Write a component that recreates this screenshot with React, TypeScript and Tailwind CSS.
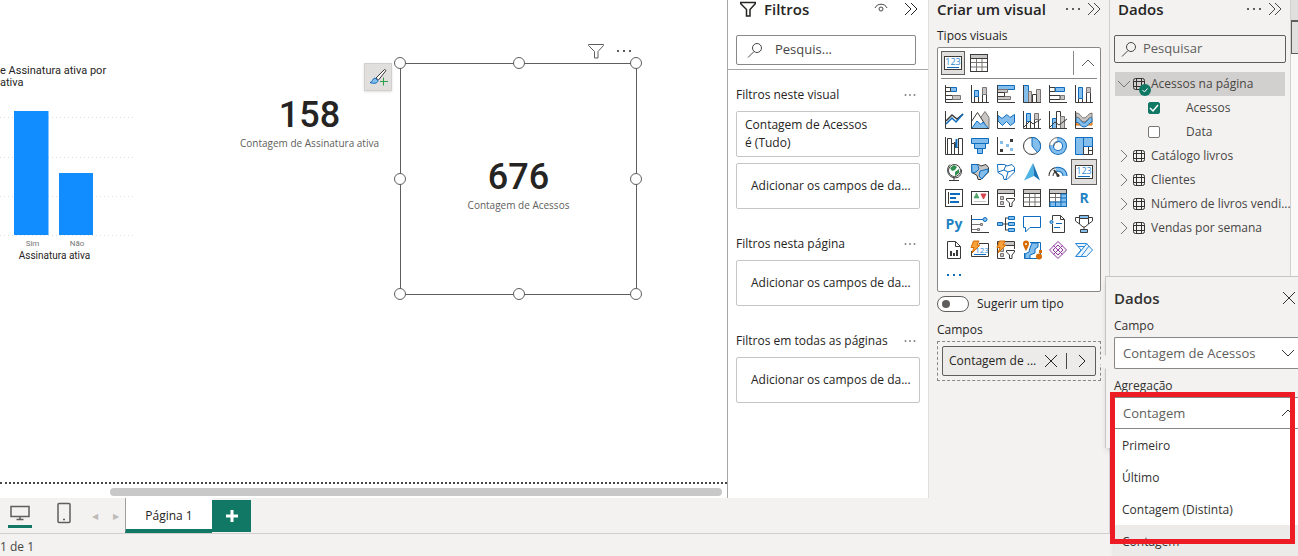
import { useState, type ReactNode } from 'react'

const K = '#3b3a39'
const B = '#0f6cbd'
const L = '#83beec'
const G = '#7a7574'
const S = '#c8c6c4'

function Icon({ children, className = 'size-[18px]' }: { children: ReactNode; className?: string }) {
  return (
    <svg viewBox="0 0 18 18" fill="none" className={`${className} shrink-0 overflow-visible`} aria-hidden="true">
      {children}
    </svg>
  )
}

const axes = <path d="M.5 0v17.5H18" stroke={K} />

const card123 = (
  <>
    <rect x=".5" y="2.5" width="17" height="13" fill="#fff" stroke={K} />
    <path d="M3 13.5h12" stroke={B} />
    <text x="9" y="11" fontSize="9" textAnchor="middle" fill="#2b88d8">123</text>
  </>
)

const tableIcon = (
  <>
    <rect x=".5" y=".5" width="17" height="17" fill="#fff" stroke={K} />
    <path d="M1 2.5h16" stroke={S} strokeWidth="3" />
    <path d="M.5 4.5h17M.5.5h17" stroke={K} />
    <path d="M1 8.5h16M1 13h16M6.5 5v12M12 5v12" stroke={G} />
  </>
)

const slicer = (
  <>
    <path d="M8 17.5H.5V.5h17V8" stroke={K} />
    <path d="M1 2.5h16" stroke={S} strokeWidth="3" />
    <path d="M1 4.5h16" stroke={K} />
    <path d="M3.5 7.5h3v3h-3zM3.5 12.5h3v3h-3z" fill={S} stroke={G} />
    <path d="M9.5 9.5h8v1.5L15 14v3.5h-2.500V14l-3-3z" fill="#fff" stroke={K} />
  </>
)

const bolt = <path d="M2.500 0H8L6 4h3L1 12l2-5.500H0z" fill="#f8a23c" stroke="#d86a00" />

const visuals: { name: string; art: ReactNode }[] = [
  { name: 'Barras empilhadas', art: <><path d="M5.500 2.500h6v4h-6z" fill={L} stroke={B} /><path d="M1 2.500h4.500v4H1" stroke={K} fill="#fff" /><path d="M1 10.500h6.500v4H1" stroke={K} fill="#fff" /><path d="M7.500 10.500h8v4h-8z" fill={S} stroke={G} />{axes}</> },
  { name: 'Colunas empilhadas', art: <><path d="M3.500 11.500h4v6h-4zM11.500 9.500h4v8h-4z" fill="#fff" stroke={K} /><path d="M3.500 5.500h4v6h-4z" fill={L} stroke={B} /><path d="M11.500 2.500h4v7h-4z" fill={S} stroke={G} />{axes}</> },
  { name: 'Barras agrupadas', art: <><path d="M.5.5h17v4H.5z" fill={L} stroke={B} /><path d="M.5 4.500h10v3H.5zM.5 11.500h13v3H.5z" fill={S} stroke={G} /><path d="M.5 7.500h7v4H.5z" fill="#fff" stroke={K} />{axes}</> },
  { name: 'Colunas agrupadas', art: <><path d="M.5.5h5v17h-5z" fill={L} stroke={B} /><path d="M5.500 6.500h3v11h-3zM13.500 4.500h4v13h-4z" fill={S} stroke={G} /><path d="M9.500 9.500h4v8h-4z" fill="#fff" stroke={K} />{axes}</> },
  { name: 'Barras 100%', art: <><path d="M1 2.500h5v4H1M1 10.500h10v4H1" fill="#fff" stroke={K} /><path d="M6.500 2.500h9v4h-9z" fill={L} stroke={B} /><path d="M11.500 10.500h4v4h-4z" fill={S} stroke={G} />{axes}</> },
  { name: 'Colunas 100%', art: <><path d="M3.500 13.500h4v4h-4zM11.500 7.500h4v10h-4z" fill="#fff" stroke={K} /><path d="M3.500 2.500h4v11h-4z" fill={L} stroke={B} /><path d="M11.500 2.500h4v5h-4z" fill={S} stroke={G} />{axes}</> },
  { name: 'Linhas', art: <><path d="M1 10l6-6 5 4 6-5" stroke={K} strokeWidth="1.500" /><path d="M1 13l6-6 4 4 7-8" stroke={B} strokeWidth="1.500" />{axes}</> },
  { name: 'Área', art: <><path d="M8 9l6-8.500 4 6v11H8z" fill={S} stroke={G} /><path d="M.5 10.500l6-9 7 11-2 5H.5z" fill="#fff" stroke={K} /><path d="M1 17l5-7 4 3.500 2-2.500 5.500 6.500H1z" fill={L} stroke={B} />{axes}</> },
  { name: 'Área empilhada', art: <><path d="M1 4.500l4 3 5-4 3 3 4.500-3v8l-4 3-4-4-4 4L1 10z" fill={L} stroke={B} />{axes}</> },
  { name: 'Linhas e colunas empilhadas', art: <><path d="M3.500 8.500h4v9h-4zM11.500 7.500h4v10h-4z" fill="#fff" stroke={K} /><path d="M3.500 2.500h4v8h-4z" fill={L} stroke={B} /><path d="M11.500 2.500h4v6h-4z" fill={S} stroke={G} /><path d="M1 16l6-6 3 3 8-5" stroke={K} />{axes}</> },
  { name: 'Linhas e colunas agrupadas', art: <><path d="M3.500 7.500h4v10h-4z" fill={L} stroke={B} /><path d="M7.500.5h4v17h-4z" fill="#fff" stroke={K} /><path d="M11.500 5.500h4v12h-4z" fill={S} stroke={G} /><path d="M1 16l5-5 4 3 8-6" stroke={K} />{axes}</> },
  { name: 'Faixas', art: <><path d="M1 9h5v5H1zM12 8h5v6h-5z" fill="#f2a154" stroke="#d86a00" /><path d="M1 6c5 0 5 6 8 6s4-6 8-6v5c-3 0-4 5-8 5s-4-5-8-5z" fill={L} stroke={B} /><path d="M1 2c5 0 5 5 8 5s4-5 8-5v4c-4 0-5 5-8 5S5 6 1 6z" fill={S} stroke={G} />{axes}</> },
  { name: 'Cascata', art: <><path d="M2.500 17V1.500h4v5h3V17M13.500 17V1.500h4V17M6.500 6v11" fill="#fff" stroke={K} /><path d="M9 5.500h1.500v5h3v-9" stroke={K} /><path d="M11.500 2v9" stroke={B} strokeWidth="2" />{axes}</> },
  { name: 'Funil', art: <path d="M.5 1.500h17v5H.5zM3.500 6.500h11v5h-11zM6.500 11.500h5v5h-5z" fill={L} stroke={B} /> },
  { name: 'Dispersão', art: <><path d="M3 12h3v3H3zM13 2h3v3h-3z" fill={K} /><path d="M3 4h3v3H3zM9 7h3v3H9zM13 11h3v3h-3z" fill={L} />{axes}</> },
  { name: 'Pizza', art: <><circle cx="9" cy="9" r="8.500" fill="#fff" stroke={K} /><path d="M9 .5a8.500 8.500 0 0 1 5.500 15L9 9z" fill={L} stroke={B} /></> },
  { name: 'Rosca', art: <><circle cx="9" cy="9" r="6.500" stroke={B} strokeWidth="5" /><circle cx="9" cy="9" r="6.500" stroke={L} strokeWidth="3" /><path d="M2 8a7 7 0 0 1 6-6" stroke="#fff" strokeWidth="4" /><path d="M.5 9A8.500 8.500 0 0 1 9 .5M5 9a4 4 0 0 1 4-4" stroke={G} /></> },
  { name: 'Treemap', art: <><path d="M.5.5h8v17h-8z" fill={L} stroke={B} /><path d="M8.500 9.500h5v8h-5zM13.500 9.500h4v4h-4zM13.500 13.500h4v4h-4z" fill="#fff" stroke={K} /><path d="M8.500.5h9v9h-9z" fill={L} stroke={B} /></> },
  { name: 'Mapa', art: <><circle cx="9.500" cy="7.500" r="6" fill="#fff" stroke={K} /><path d="M5 5l4-3 3 2-2 3-3 1zM10 9l4-3v4l-4 3z" fill="#2f8f4e" /><path d="M5 1.500C1 5 2 13 8 14.500s9-3 8.500-8M9 15v2M4 17.500h10" stroke={K} /></> },
  { name: 'Mapa coroplético', art: <><path d="M.5 1.500h7L10 3l5-1.500 2.500 3V9L14 12.500l-4 4H7l-1-4-5-3z" fill={S} stroke={K} /><path d="M.5 1.500h6L8 6 5 9l-4 1zM9 8l8-2v3l-3 3-3 4-3-3z" fill={L} stroke={B} /></> },
  { name: 'Mapa de formas', art: <><path d="M.5 1.500h7L10 3l5-1.500 2.500 3V9L14 12.500l-4 4H7l-1-4-5-3z" fill="#fff" stroke={B} /><path d="M1 9l6-2 2-5M7 7l4 2 6-2M11 9l-2 7" stroke={B} /></> },
  { name: 'Azure Maps', art: <><path d="M10 0L1 17.500l10-4.500z" fill="#50b4e4" /><path d="M10 0l7 17.500L11 13z" fill="#1b74b8" /></> },
  { name: 'Medidor', art: <><path d="M2 13a7 7 0 0 1 5-6.500" stroke={K} strokeWidth="5" /><path d="M2 13a7 7 0 0 1 5-6.500" stroke="#fff" strokeWidth="3" /><path d="M7 6.500A7 7 0 0 1 16 13" stroke={B} strokeWidth="5" /><path d="M7 6.500A7 7 0 0 1 16 13" stroke={L} strokeWidth="3" /><path d="M5 7l4.500 6" stroke={K} strokeWidth="2" /><circle cx="9" cy="12.500" r="1.500" fill={K} /></> },
  { name: 'Cartão', art: card123 },
  { name: 'Cartão de várias linhas', art: <><rect x=".5" y=".5" width="17" height="17" fill="#fff" stroke={K} /><path d="M3.500 3v12" stroke={K} /><path d="M5 5h10M5 9h6M5 13h9" stroke={B} strokeWidth="2" /></> },
  { name: 'KPI', art: <><rect x=".5" y="2.500" width="17" height="13" fill="#fff" stroke={K} /><path d="M3 9l2.500-5L8 9z" fill="#4fa66a" stroke="#2f8f4e" strokeWidth=".5" /><path d="M10 5h5l-2.500 5z" fill="#d64550" stroke="#d64550" /><path d="M3 12.500h12" stroke={S} /></> },
  { name: 'Segmentação', art: slicer },
  { name: 'Tabela', art: tableIcon },
  { name: 'Matriz', art: <>{tableIcon}<path d="M12 5h5.500v12.500H1V13h11z" fill={L} stroke={B} /><path d="M6.500 13v4M12 13v4M12 9h5M12 13h5" stroke={B} /></> },
  { name: 'R', art: <text x="9" y="14" fontSize="14" fontWeight="700" textAnchor="middle" fill="#1f83c4">R</text> },
  { name: 'Python', art: <text x="9" y="14" fontSize="14" fontWeight="700" textAnchor="middle" fill="#1f83c4">Py</text> },
  { name: 'Influenciadores', art: <><path d="M1 4.500h11" stroke={B} /><path d="M1 9.500h8M1 14.500h5" stroke={G} /><circle cx="14" cy="4.500" r="2" fill={L} stroke={B} /><path d="M9.500 8.500h2v2h-2zM6.500 13.500h2v2h-2z" fill={S} stroke={G} />{axes}</> },
  { name: 'Árvore hierárquica', art: <><path d="M5 9h6M8.500 3v12M8 3h4M8 15h4" stroke={K} /><path d="M.5 7.500h5v3h-5zM11.500 1.500h6v3h-6zM11.500 7.500h6v3h-6zM11.500 13.500h6v3h-6z" fill={L} stroke={B} /></> },
  { name: 'P e R', art: <path d="M.5 1.500h17v11H7L2.500 17v-4.500h-2z" fill="#fff" stroke={B} /> },
  { name: 'Narrativa', art: <><path d="M3.500 5V.5h8l4 4v13h-12V9M11.500.5v4h4" stroke={K} /><circle cx="2.500" cy="7" r="1.500" fill={L} stroke={B} /><path d="M7 8.500h6M5 12.500h6" stroke={B} /></> },
  { name: 'Metas', art: <><path d="M4.500.5h9V9L10 12H8L4.500 9zM4.500 2.500h-4V6l4 3M13.500 2.500h4V6l-4 3M9 12v3" fill="#fff" stroke={K} /><path d="M4.500.5h9v3h-9zM5.500 14.500h7v3h-7z" fill={L} stroke={K} /></> },
  { name: 'Relatório paginado', art: <><path d="M2.500.5h8l5 5v12h-13zM10.500.5v5h5" fill="#fff" stroke={K} /><path d="M5 10h2v5H5zM8 12h2v3H8zM11 9h2v6h-2z" fill={K} /></> },
  { name: 'Novo cartão', art: <><path d="M8 2.500h9.500v13H.5V10" fill="#fff" stroke={K} /><path d="M3 13.500h12" stroke={B} /><text x="11" y="12" fontSize="8" textAnchor="middle" fill="#2b88d8">123</text>{bolt}</> },
  { name: 'Nova segmentação', art: <>{slicer}{bolt}</> },
  { name: 'ArcGIS', art: <><path d="M7 1.500h10.500v16H1.500V12" fill="#fff" stroke={B} /><path d="M9 2h6v4l-3 2v4l-5 2v3.500H2V13l4-2 1-4z" fill={L} stroke={B} /><path d="M0 2.500A3 3 0 0 1 6 2.500C6 5 3 10 3 10S0 5 0 2.500" fill="#d86a00" /><circle cx="3" cy="3" r="1" fill="#fff" /><circle cx="16" cy="15.500" r="3" fill="#d86a00" /><path d="M16 9h3v3h-3z" fill="#d86a00" /></> },
  { name: 'Power Apps', art: <path d="M9 .5L17.500 9 9 17.500.5 9zM4.500 4.500l9 9M13.500 4.500l-9 9M9 4l5 5-5 5-5-5z" fill="#fbf5fc" stroke="#8e3a9d" /> },
  { name: 'Power Automate', art: <path d="M.5 2.500h11L17.500 9l-6 6.500H.5L6 9zM3 5.500h6M12 2.500L2 14.500M14 5L6 15.500" stroke="#2b88d8" fill="#eef6fd" /> },
]

const Chevron = ({ d, className }: { d: string; className?: string }) => (
  <svg viewBox="0 0 14 14" className={`size-3.5 shrink-0 ${className ?? ''}`} fill="none" stroke="currentColor" aria-hidden="true">
    <path d={d} />
  </svg>
)

const DOWN = 'M1 4l6 6 6-6'
const UP = 'M1 10l6-6 6 6'
const RIGHT = 'M4 1l6 6-6 6'
const COLLAPSE = 'M1 1l6 6-6 6M7 1l6 6-6 6'
const CLOSE = 'M1 1l12 12M13 1L1 13'

function Dots({ className = 'w-4 text-[#605e5c]' }: { className?: string }) {
  return (
    <svg viewBox="0 0 16 4" className={`h-1 ${className}`} fill="currentColor" aria-hidden="true">
      <path d="M1 1h2v2H1zM7 1h2v2H7zM13 1h2v2h-2z" />
    </svg>
  )
}

function SearchGlyph() {
  return (
    <svg viewBox="0 0 16 16" className="size-4 shrink-0" fill="none" stroke="#484644" aria-hidden="true">
      <circle cx="10" cy="6" r="4.500" />
      <path d="M7 9.500L1 15.500" />
    </svg>
  )
}

function Funnel({ className }: { className: string }) {
  return (
    <svg viewBox="0 0 16 16" className={className} fill="none" stroke="currentColor" aria-hidden="true">
      <path d="M.5 1.500h15v1L10 8.500V15H6.500V8.500L.5 2.500z" />
    </svg>
  )
}

const handles = [
  '-left-px -top-px', 'left-1/2 -top-px', 'left-full -top-px',
  '-left-px top-1/2', 'left-full top-1/2',
  '-left-px top-full', 'left-1/2 top-full', 'left-full top-full',
]

function CardValue({ value, label }: { value: string; label: string }) {
  return (
    <div className="text-center">
      <p className="font-['Roboto',sans-serif] text-4xl font-medium leading-9 text-[#252423]">{value}</p>
      <p className="text-[10px] leading-5 whitespace-nowrap text-[#605e5c]">{label}</p>
    </div>
  )
}

function ReportCanvas() {
  return (
    <main className="relative min-w-0 flex-1 overflow-hidden bg-white">
      <svg width="140" height="210" viewBox="0 0 140 210" className="absolute top-[60px] left-0 font-['Roboto',sans-serif]">
        <g fill="#252423" fontSize="11">
          <text x="0" y="14">e Assinatura ativa por</text>
          <text x="0" y="26">ativa</text>
          <text x="54.500" y="199" fontSize="10" textAnchor="middle">Assinatura ativa</text>
        </g>
        <path d="M0 57.500h133M0 97.500h133M0 136.500h133M0 175.500h133" stroke="#dcdcdc" strokeDasharray="1 3" />
        <path d="M14 51h34.500v124H14zM59 113h34v62H59z" fill="#118dff" />
        <g fill="#777" fontSize="8" textAnchor="middle">
          <text x="32.500" y="186">Sim</text>
          <text x="77" y="186">Não</text>
        </g>
      </svg>

      <div className="absolute top-[97px] left-[240px]">
        <CardValue value="158" label="Contagem de Assinatura ativa" />
      </div>

      <button aria-label="Formatar visual" className="absolute top-[63px] left-[364px] flex size-7 items-center justify-center border border-[#d2d0ce] bg-[#e1dfdd] shadow">
        <Icon>
          <path d="M7 10L15.500 1.500l1.500 1L9.500 12z" fill="#fff" stroke={K} />
          <path d="M1 14.500c3 0 2-4 5-4.500l3 2.500c0 3-5 3.500-8 2z" fill={L} stroke={B} />
          <path d="M14.500 9.500v8M11 13.500h8" stroke="#2f9e44" />
        </Icon>
      </button>

      <div className="absolute top-[43px] left-[588px] flex items-center gap-3 text-[#605e5c]">
        <button aria-label="Filtros do visual"><Funnel className="size-4" /></button>
        <button aria-label="Mais opções do visual"><Dots /></button>
      </div>
      <section className="absolute top-[63px] left-[400px] flex h-[232px] w-[237px] items-center justify-center border border-[#605e5c] pt-4">
        <CardValue value="676" label="Contagem de Acessos" />
        {handles.map((pos) => (
          <span key={pos} className={`absolute size-3 -translate-1/2 rounded-full border border-[#605e5c] bg-white ${pos}`} />
        ))}
      </section>

      <div className="absolute bottom-3.5 left-0 w-full border-t-2 border-dotted border-[#484644]" />
      <div className="absolute right-[5px] bottom-0.5 left-[110px] h-2 rounded-full bg-[#c8c8c8]" />
    </main>
  )
}

const filterGroups = [
  { title: 'Filtros neste visual', applied: true },
  { title: 'Filtros nesta página', applied: false },
  { title: 'Filtros em todas as páginas', applied: false },
]

function FiltersPane() {
  return (
    <aside className="w-[202px] shrink-0 border-x border-l-[#a6a6a6] border-r-[#e1dfdd] bg-white">
      <div className="border-b border-[#a6a6a6] px-2 pb-1">
        <header className="flex h-[35px] items-start pr-0.5 pl-1">
          <Funnel className="mt-px size-4 stroke-[1.5] text-[#252423]" />
          <h2 className="ml-2 flex-1 text-[15px] leading-[18px] font-semibold">Filtros</h2>
          <button aria-label="Ocultar filtros" className="mt-px mr-4">
            <svg viewBox="0 0 14 14" className="size-3.5" fill="none" stroke="#484644" aria-hidden="true">
              <path d="M1 7c2-5 10-5 12 0" />
              <circle cx="7" cy="8" r="2" />
            </svg>
          </button>
          <button aria-label="Recolher filtros" className="mt-0.5"><Chevron d={COLLAPSE} /></button>
        </header>
        <label className="mr-1 flex h-[30px] items-center gap-3 rounded-xs border border-[#8a8886] px-2.5">
          <SearchGlyph />
          <input aria-label="Pesquisar filtros" placeholder="Pesquis..." className="w-full min-w-0 text-[13px] outline-none placeholder:text-[#484644]" />
        </label>
      </div>
      {filterGroups.map(({ title, applied }) => (
        <section key={title} className="px-2 pt-[15px]">
          <header className="mb-1.5 flex h-5 items-center justify-between pr-1">
            <h3 className="text-xs whitespace-nowrap">{title}</h3>
            <button aria-label={`Opções: ${title}`}><Dots className="w-3 text-[#605e5c]" /></button>
          </header>
          {applied && (
            <button className="mb-1.5 block h-[46px] w-full rounded-xs border border-[#c8c6c4] px-2 text-left text-xs leading-[18px]">
              Contagem de Acessos<br />é (Tudo)
            </button>
          )}
          <div className="mb-2.5 flex h-[46px] items-center rounded-xs border border-[#c8c6c4] px-3.5 text-xs whitespace-nowrap">
            Adicionar os campos de da...
          </div>
        </section>
      ))}
    </aside>
  )
}

function PageTabs() {
  return (
    <nav className="flex h-[35px] shrink-0 items-start bg-[#f3f2f1]">
      <button aria-label="Layout da área de trabalho" className="mt-1.5 ml-2 h-6 w-6 border-b-3 border-[#117865]">
        <svg viewBox="0 0 20 16" className="mx-auto mb-1 h-4 w-5" fill="none" stroke="#605e5c" strokeWidth="1.500" aria-hidden="true">
          <path d="M1 1.500h18v10H1zM10 12v2M6.500 14.500h7" />
        </svg>
      </button>
      <button aria-label="Layout móvel" className="mt-1 ml-6">
        <svg viewBox="0 0 16 22" className="h-[22px] w-4" fill="none" stroke="#605e5c" strokeWidth="1.500" aria-hidden="true">
          <rect x="2" y="1.500" width="12" height="19" rx="1" />
          <path d="M7 17.500h2" />
        </svg>
      </button>
      <button aria-label="Página anterior" className="mt-2.5 ml-5 text-[8px] leading-4 text-[#bebbb8]">◀</button>
      <button aria-label="Próxima página" className="mt-2.5 ml-[15px] text-[8px] leading-4 text-[#bebbb8]">▶</button>
      <button className="ml-1.5 h-[35px] w-[87px] border-b-4 border-l border-b-[#117865] border-l-[#a19f9d] bg-white pt-1 text-xs font-medium">Página 1</button>
      <button aria-label="Nova página" className="mt-0.5 flex h-8 w-[39px] items-center justify-center bg-[#117865]">
        <svg viewBox="0 0 12 12" className="size-3" stroke="#fff" strokeWidth="3" aria-hidden="true">
          <path d="M6 0v12M0 6h12" />
        </svg>
      </button>
    </nav>
  )
}

function PaneHeader({ title }: { title: string }) {
  return (
    <header className="flex items-start text-[#484644]">
      <h2 className="flex-1 text-[15px] leading-[18px] font-semibold whitespace-nowrap text-[#252423]">{title}</h2>
      <button aria-label={`Opções: ${title}`} className="flex h-[18px] items-center"><Dots /></button>
      <button aria-label={`Recolher: ${title}`} className="mt-0.5 ml-1.5"><Chevron d={COLLAPSE} /></button>
    </header>
  )
}

function BuildPane() {
  const [selected, setSelected] = useState('Cartão')
  return (
    <aside className="w-[180px] shrink-0 bg-[#f3f2f1] pr-2 pl-2 text-xs">
      <PaneHeader title="Criar um visual" />
      <h3 className="mt-[9px] mb-0.5 leading-[18px]">Tipos visuais</h3>
      <div className="h-[245px] rounded-xs border border-[#8a8886] bg-white px-[3px] pt-[3px]">
        <div className="flex h-7 items-start border-b border-[#8a8886]">
          <button aria-label="Cartão recente" className="flex size-6 items-center justify-center border border-[#605e5c] bg-[#e1dfdd]"><Icon>{card123}</Icon></button>
          <button aria-label="Tabela recente" className="mt-[3px] ml-[5px]"><Icon>{tableIcon}</Icon></button>
          <button aria-label="Recolher tipos" className="ml-auto flex h-6 w-6 items-center justify-end border-l border-[#8a8886] pr-0.5 text-[#605e5c]"><Chevron d={UP} /></button>
        </div>
        <div className="mt-0.5 grid grid-cols-6">
          {visuals.map(({ name, art }) => (
            <button
              key={name}
              aria-label={name}
              onClick={() => setSelected(name)}
              className={`flex h-[26px] items-center justify-center border ${name === selected ? 'border-[#605e5c] bg-[#e1dfdd]' : 'border-transparent'}`}
            >
              <Icon>{art}</Icon>
            </button>
          ))}
        </div>
        <button aria-label="Mais visuais" className="mt-2.5 ml-[5px] block"><Dots className="w-4 text-[#0f6cbd]" /></button>
      </div>
      <label className="mt-[3px] flex h-[17px] items-center gap-2">
        <input type="checkbox" className="peer sr-only" />
        <span className="flex h-4 w-8 items-center rounded-full border border-[#605e5c] bg-white px-1">
          <span className="size-2 rounded-full bg-[#605e5c]" />
        </span>
        Sugerir um tipo
      </label>
      <h3 className="mt-[9px] mb-0.5 leading-[18px]">Campos</h3>
      <div className="border border-dashed border-[#8a8886] p-1">
        <div className="flex h-[30px] items-center rounded-xs border border-[#605e5c] bg-[#edebe9] pr-1.5 pl-1.5 text-[#252423]">
          <span className="flex-1 whitespace-nowrap">Contagem de ...</span>
          <button aria-label="Remover campo"><Chevron d={CLOSE} /></button>
          <span className="mx-2 h-4 w-px bg-[#484644]" />
          <button aria-label="Abrir campo"><Chevron d={RIGHT} /></button>
        </div>
      </div>
    </aside>
  )
}

function TableGlyph({ checked = false }: { checked?: boolean }) {
  return (
    <span className="relative size-3 shrink-0">
      <svg viewBox="0 0 12 12" className="size-3" fill="none" stroke="#323130" aria-hidden="true">
        <rect x=".5" y=".5" width="11" height="11" rx="2" />
        <path d="M0 3.500h12M0 8.500h12M3.500 0v12M8.500 0v12" />
      </svg>
      {checked && (
        <svg viewBox="0 0 12 12" className="absolute top-1.5 left-1.5 size-3" aria-hidden="true">
          <circle cx="6" cy="6" r="6" fill="#117865" />
          <path d="M3.500 6l2 2 3-3.500" fill="none" stroke="#fff" />
        </svg>
      )}
    </span>
  )
}

function FieldCheck({ label, initial = false }: { label: string; initial?: boolean }) {
  const [on, setOn] = useState(initial)
  return (
    <label className="flex h-6 items-center pl-[33px]">
      <span className="relative mr-[26px] size-3">
        <input
          type="checkbox"
          checked={on}
          onChange={(e) => setOn(e.target.checked)}
          className="block size-3 appearance-none rounded-xs border border-[#797775] bg-white checked:border-[#117865] checked:bg-[#117865]"
        />
        {on && (
          <svg viewBox="0 0 12 12" className="pointer-events-none absolute inset-0 size-3" fill="none" stroke="#fff" strokeWidth="1.500" aria-hidden="true">
            <path d="M2 6l3 3 5-6" />
          </svg>
        )}
      </span>
      {label}
    </label>
  )
}

const tables = ['Catálogo livros', 'Clientes', 'Número de livros vendi...', 'Vendas por semana']

function DataPane() {
  return (
    <aside className="w-[182px] shrink-0 border-x border-[#d2d0ce] bg-[#f3f2f1] px-[5px] text-xs text-[#484644]">
      <div className="px-[3px]"><PaneHeader title="Dados" /></div>
      <label className="mt-[17px] -mr-px -ml-px flex h-7 items-center gap-1.5 rounded-xs border border-[#605e5c] px-1.5">
        <SearchGlyph />
        <input aria-label="Pesquisar dados" placeholder="Pesquisar" className="w-full min-w-0 text-[13px] outline-none placeholder:text-[#605e5c]" />
      </label>
      <div className="mt-[9px]">
        <button className="flex h-6 w-full items-center bg-[#d2d0ce] pl-0.5 whitespace-nowrap">
          <Chevron d={DOWN} className="text-[#797775]" />
          <span className="ml-0.5 flex"><TableGlyph checked /></span>
          <span className="ml-1.5">Acessos na página</span>
        </button>
        <FieldCheck label="Acessos" initial />
        <FieldCheck label="Data" />
        {tables.map((name) => (
          <button key={name} className="flex h-6 w-full items-center pl-0.5 whitespace-nowrap">
            <Chevron d={RIGHT} className="text-[#797775]" />
            <span className="ml-0.5 flex"><TableGlyph /></span>
            <span className="ml-1.5">{name}</span>
          </button>
        ))}
      </div>
    </aside>
  )
}

const aggregations = ['Primeiro', 'Último', 'Contagem (Distinta)', 'Contagem']

function AggregationPopover() {
  return (
    <>
      <section className="absolute top-[276px] right-0 h-[172px] w-[193px] border-t border-l border-[#c8c6c4] bg-[#f3f2f1] pl-2 text-xs text-[#323130] shadow-md">
        <span className="absolute top-20 -left-1.5 size-2.5 rotate-45 bg-[#f3f2f1]" />
        <header className="mt-[11px] mb-[9px] flex h-5 items-center justify-between pr-0.5">
          <h2 className="text-[15px] font-semibold">Dados</h2>
          <button aria-label="Fechar"><Chevron d={CLOSE} /></button>
        </header>
        <label htmlFor="campo" className="block h-5 leading-[18px]">Campo</label>
        <div className="relative">
          <select id="campo" className="h-8 w-full appearance-none rounded-l-xs border border-r-0 border-[#8a8886] bg-white pt-0.5 pl-2 text-[13px] text-[#605e5c]">
            <option>Contagem de Acessos</option>
          </select>
          <Chevron d={DOWN} className="pointer-events-none absolute top-[9px] right-[3px]" />
        </div>
        <label htmlFor="agregacao" className="mt-2 block h-5 leading-[18px]">Agregação</label>
        <div className="relative">
          <select id="agregacao" defaultValue="Contagem" className="h-8 w-full appearance-none border border-r-0 border-[#8a8886] bg-white pt-0.5 pl-2 text-[13px] text-[#605e5c]">
            {aggregations.map((name) => <option key={name}>{name}</option>)}
          </select>
          <Chevron d={UP} className="pointer-events-none absolute top-[9px] right-[3px]" />
          <ul role="listbox" aria-label="Agregação" className="absolute top-full right-0 left-0 bg-white shadow-md">
            {aggregations.map((name) => (
              <li
                key={name}
                role="option"
                aria-selected={name === 'Contagem'}
                className="h-8 pl-2 leading-[34px] aria-selected:bg-[#edebe9]"
              >
                {name}
              </li>
            ))}
          </ul>
        </div>
      </section>
      <div className="pointer-events-none absolute top-[392px] right-[3px] h-[152px] w-[185px] border-5 border-[#ed1c24]" />
    </>
  )
}

export default function App() {
  return (
    <div className="relative flex h-screen flex-col overflow-hidden bg-[#f3f2f1] font-['Open_Sans','Noto_Sans',sans-serif] text-[#252423]">
      <div className="flex min-h-0 flex-1">
        <div className="flex min-w-0 flex-1 flex-col">
          <div className="flex min-h-0 flex-1">
            <ReportCanvas />
            <FiltersPane />
          </div>
          <PageTabs />
        </div>
        <BuildPane />
        <DataPane />
        <div className="w-[7px] shrink-0 bg-[#faf9f8]">
          <div className="h-[22px] border-b-2 border-[#605e5c] bg-[#e1dfdd]" />
          <div className="h-8 border-b border-l border-[#605e5c] bg-[#e1dfdd]" />
        </div>
      </div>
      <footer className="h-[23px] shrink-0 border-t border-[#d2d0ce] pt-1 text-xs leading-[18px] text-[#484644]">1 de 1</footer>
      <AggregationPopover />
    </div>
  )
}
